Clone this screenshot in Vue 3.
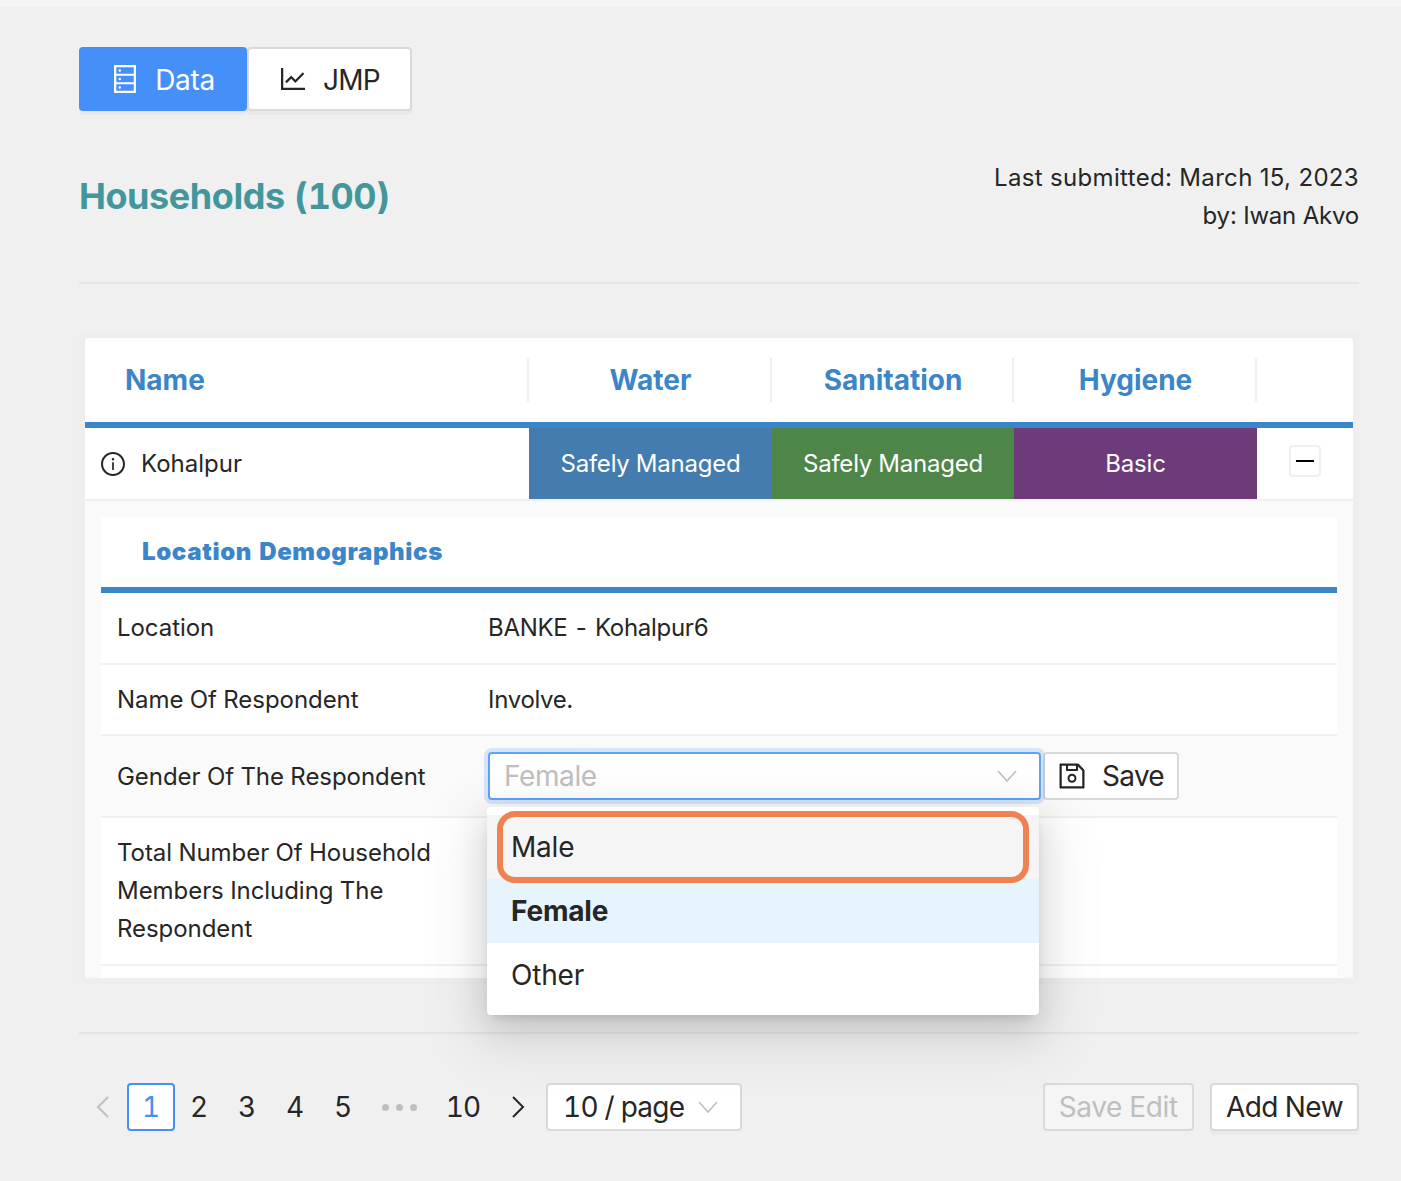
<script setup>
const statusCells = [
  { label: 'Safely Managed', color: '#447caf' },
  { label: 'Safely Managed', color: '#4e8549' },
  { label: 'Basic', color: '#6d3a7a' }
]
const columns = ['Water', 'Sanitation', 'Hygiene', '']
const pages = ['2', '3', '4', '5']
</script>

<template>
  <div class="page">
    <div class="tabs">
      <button class="tab tab-active">
        <svg class="tab-icon" viewBox="64 64 896 896" fill="currentColor"><path d="M832 64H192c-17.7 0-32 14.3-32 32v832c0 17.7 14.3 32 32 32h640c17.7 0 32-14.3 32-32V96c0-17.7-14.3-32-32-32zm-600 72h560v208H232V136zm560 480H232V408h560v208zm0 272H232V680h560v208zM304 240a40 40 0 1 0 80 0 40 40 0 1 0-80 0zm0 272a40 40 0 1 0 80 0 40 40 0 1 0-80 0zm0 272a40 40 0 1 0 80 0 40 40 0 1 0-80 0z"/></svg>
        <span class="tab-label">Data</span>
      </button>
      <button class="tab tab-jmp">
        <svg class="tab-icon" viewBox="64 64 896 896" fill="currentColor"><path d="M888 792H200V168c0-4.4-3.6-8-8-8h-56c-4.4 0-8 3.6-8 8v688c0 4.4 3.6 8 8 8h752c4.4 0 8-3.6 8-8v-56c0-4.4-3.6-8-8-8zM305.8 637.7c3.1 3.1 8.1 3.1 11.3 0l138.3-137.6L583 628.5c3.1 3.1 8.2 3.1 11.3 0l275.4-275.3c3.1-3.1 3.1-8.2 0-11.3l-39.6-39.6a8.03 8.03 0 0 0-11.3 0l-230 229.9L461.4 404a8.03 8.03 0 0 0-11.3 0L266.3 586.7a8.03 8.03 0 0 0 0 11.3l39.5 39.7z"/></svg>
        <span class="tab-label">JMP</span>
      </button>
    </div>

    <header class="heading">
      <h1>Households (100)</h1>
      <div class="submitted">
        <div>Last submitted: March 15, 2023</div>
        <div>by: Iwan Akvo</div>
      </div>
    </header>

    <div class="table-frame">
      <div class="table-card">
        <div class="grid head">
          <div class="head-cell head-name">Name</div>
          <div v-for="c in columns" :key="c" class="head-cell" :class="{ 'head-last': !c }">{{ c }}</div>
        </div>
        <div class="grid row">
          <div class="name-cell">
            <svg class="info" viewBox="64 64 896 896" fill="currentColor"><path d="M512 64C264.6 64 64 264.6 64 512s200.6 448 448 448 448-200.6 448-448S759.4 64 512 64zm0 820c-205.4 0-372-166.6-372-372s166.6-372 372-372 372 166.6 372 372-166.6 372-372 372z"/><path d="M464 336a48 48 0 1 0 96 0 48 48 0 1 0-96 0zm72 112h-48c-4.4 0-8 3.6-8 8v272c0 4.4 3.6 8 8 8h48c4.4 0 8-3.6 8-8V456c0-4.4-3.6-8-8-8z"/></svg>
            Kohalpur
          </div>
          <div v-for="(s, i) in statusCells" :key="i" class="status" :style="{ background: s.color }">{{ s.label }}</div>
          <div class="toggle-cell"><span class="toggle"><i></i></span></div>
        </div>

        <div class="expanded">
          <div class="inner">
            <div class="inner-title">Location Demographics</div>
            <div class="field">
              <div>Location</div>
              <div class="value">BANKE - Kohalpur6</div>
            </div>
            <div class="field field-short">
              <div>Name Of Respondent</div>
              <div class="value">Involve.</div>
            </div>
            <div class="field field-edit">
              <div class="edit-label">Gender Of The Respondent</div>
              <div class="editor">
                <div class="select-wrap">
                  <div class="select">
                    <span>Female</span>
                    <svg class="chev" viewBox="0 0 20 12" fill="none" stroke="currentColor" stroke-width="1.6"><path d="M1 1l9 10 9-10"/></svg>
                  </div>
                  <div class="dropdown">
                    <div class="option option-hover">Male</div>
                    <div class="option option-selected">Female</div>
                    <div class="option">Other</div>
                    <div class="highlight"></div>
                  </div>
                </div>
                <button class="save">
                  <svg class="save-icon" viewBox="64 64 896 896" fill="currentColor"><path d="M893.3 293.3L730.7 130.7c-7.5-7.5-16.7-13-26.7-16V112H144c-17.7 0-32 14.3-32 32v736c0 17.7 14.3 32 32 32h736c17.7 0 32-14.3 32-32V338.5c0-17-6.7-33.2-18.7-45.2zM384 184h256v104H384V184zm456 656H184V184h136v136c0 17.7 14.3 32 32 32h320c17.7 0 32-14.3 32-32V205.8l136 136V840zM512 442c-79.5 0-144 64.5-144 144s64.5 144 144 144 144-64.5 144-144-64.5-144-144-144zm0 224c-44.2 0-80-35.8-80-80s35.8-80 80-80 80 35.8 80 80-35.8 80-80 80z"/></svg>
                  Save
                </button>
              </div>
            </div>
            <div class="field">
              <div>Total Number Of Household Members Including The Respondent</div>
              <div class="value"></div>
            </div>
            <div class="field-tail"></div>
          </div>
        </div>
      </div>
    </div>

    <footer class="footer">
      <div class="pagination">
        <svg class="arrow arrow-off" viewBox="0 0 14 24" fill="none" stroke="currentColor" stroke-width="2"><path d="M12 2L2 12l10 10"/></svg>
        <span class="page-num page-current">1</span>
        <span v-for="p in pages" :key="p" class="page-num">{{ p }}</span>
        <span class="dots"><i></i><i></i><i></i></span>
        <span class="page-num page-ten">10</span>
        <svg class="arrow arrow-next" viewBox="0 0 14 24" fill="none" stroke="currentColor" stroke-width="2"><path d="M2 2l10 10L2 22"/></svg>
        <div class="size-select">
          <span>10 / page</span>
          <svg class="chev" viewBox="0 0 20 12" fill="none" stroke="currentColor" stroke-width="1.6"><path d="M1 1l9 10 9-10"/></svg>
        </div>
      </div>
      <div class="actions">
        <button class="btn btn-disabled">Save Edit</button>
        <button class="btn btn-add">Add New</button>
      </div>
    </footer>
  </div>
</template>

<style>
html, body { margin: 0; background: #f0f0f0; }
</style>

<style scoped>
.page {
  box-sizing: border-box;
  min-height: 1181px;
  padding: 40px 42px 0 79px;
  border-top: 7px solid #f5f5f5;
  background: #f0f0f0;
  font-family: Inter, "Liberation Sans", sans-serif;
  font-size: 24px;
  line-height: 38px;
  color: #262626;
  font-variant-numeric: tabular-nums;
}
button { font: inherit; color: inherit; cursor: pointer; }

.tabs { display: flex; }
.tab {
  box-sizing: border-box;
  height: 64px;
  width: 165px;
  display: flex;
  align-items: center;
  justify-content: center;
  gap: 16px;
  font-size: 28px;
  letter-spacing: -.3px;
  background: #fff;
  border: 2px solid #d9d9d9;
  border-radius: 4px;
  box-shadow: 0 4px 0 rgba(0, 0, 0, .03);
}
.tab-active {
  width: 168px;
  color: #fff;
  background: #458ff8;
  border-color: #458ff8;
}
.tab-jmp { letter-spacing: -.7px; }
.tab-icon { width: 28px; height: 28px; }
.tab-label { margin-top: 2px; }

.heading {
  display: flex;
  justify-content: space-between;
  align-items: flex-start;
  margin-top: 48px;
  padding-bottom: 48px;
  border-bottom: 2px solid #e4e4e4;
  height: 75px;
}
.heading h1 {
  margin: 15px 0 0;
  font-size: 36px;
  line-height: 44px;
  font-weight: 700;
  color: #43979c;
  letter-spacing: -.43px;
}
.submitted { text-align: right; font-variant-numeric: normal; }
.submitted div:first-child { letter-spacing: .33px; }
.submitted div:last-child { letter-spacing: -.2px; }

.table-frame {
  box-sizing: border-box;
  margin-top: 48px;
  padding: 6px 6px 0;
  background: #eeeeee;
  height: 652px;
}
.table-card { background: #fff; border-radius: 4px 4px 0 0; }

.grid { display: grid; grid-template-columns: 444px 243px 242px 243px 96px; }
.head { height: 84px; border-bottom: 6px solid #3b85c9; }
.head-cell {
  position: relative;
  display: flex;
  align-items: center;
  justify-content: center;
  font-size: 28px;
  font-weight: 700;
  color: #3b85c9;
}
.head-name { justify-content: flex-start; padding-left: 40px; }
.head-cell::after {
  content: "";
  position: absolute;
  right: 0;
  top: 20px;
  width: 2px;
  height: 44px;
  background: #f0f0f0;
}
.head-last::after { display: none; }

.row { height: 71px; border-bottom: 2px solid #f0f0f0; }
.name-cell { display: flex; align-items: center; padding-left: 16px; gap: 16px; }
.info { width: 24px; height: 24px; }
.status {
  display: flex;
  align-items: center;
  justify-content: center;
  color: #fff;
  letter-spacing: -.22px;
}
.toggle-cell { display: flex; align-items: center; justify-content: center; }
.toggle {
  box-sizing: border-box;
  width: 32px;
  height: 32px;
  margin-top: -5px;
  display: flex;
  align-items: center;
  justify-content: center;
  border: 2px solid #f0f0f0;
  border-radius: 4px;
}
.toggle i { display: block; width: 18px; height: 2px; background: #000; }

.expanded { padding: 16px 16px 0; background: #fafafa; }
.inner { background: #fff; letter-spacing: -.05px; }
.inner-title {
  height: 70px;
  padding-left: 41px;
  border-bottom: 6px solid #3b85c9;
  display: flex;
  align-items: center;
  font-weight: 900;
  color: #3b85c9;
  letter-spacing: .65px;
}
.field {
  display: grid;
  grid-template-columns: 371px 1fr;
  padding: 16px;
  border-bottom: 2px solid #f0f0f0;
}
.field-short { padding-bottom: 15px; }
.value { min-width: 0; letter-spacing: -.3px; }
.field-edit { background: #fafafa; align-items: center; }
.edit-label { margin-top: 2px; }
.field-tail { height: 12px; }

.editor { display: flex; align-items: center; letter-spacing: -.2px; font-size: 28px; }
.select-wrap { position: relative; width: 553px; }
.select {
  box-sizing: border-box;
  height: 48px;
  padding: 0 22px 0 14px;
  display: flex;
  align-items: center;
  justify-content: space-between;
  background: #fff;
  border: 2px solid #5ea3f9;
  border-radius: 4px;
  box-shadow: 0 0 0 4px rgba(69, 143, 248, .2);
  color: #bfbfbf;
}
.select span { letter-spacing: -.4px; }
.chev { width: 20px; height: 12px; color: #bfbfbf; }
.dropdown {
  position: absolute;
  z-index: 5;
  top: 55px;
  left: -1px;
  width: 552px;
  box-sizing: border-box;
  padding: 8px 0;
  background: #fff;
  border-radius: 4px;
  box-shadow: 0 6px 12px -8px rgba(0,0,0,.24), 0 12px 32px 0 rgba(0,0,0,.12), 0 18px 56px 16px rgba(0,0,0,.08);
}
.option { height: 64px; padding: 0 24px; display: flex; align-items: center; }
.option-hover { background: #f5f5f5; }
.option-selected { background: #e6f4fd; font-weight: 700; }
.highlight {
  position: absolute;
  left: 10px;
  right: 10px;
  top: 4px;
  height: 72px;
  box-sizing: border-box;
  border: 6px solid #f08153;
  border-radius: 18px;
  pointer-events: none;
}
.save {
  box-sizing: border-box;
  width: 136px;
  height: 48px;
  margin-left: 2px;
  display: flex;
  align-items: center;
  justify-content: center;
  gap: 16px;
  background: #fff;
  border: 2px solid #d9d9d9;
  border-radius: 4px;
  letter-spacing: -.7px;
}
.save-icon { width: 28px; height: 28px; }

.footer {
  margin-top: 48px;
  padding-top: 49px;
  border-top: 2px solid #e4e4e4;
  display: flex;
  justify-content: space-between;
  align-items: center;
  font-size: 28px;
}
.pagination { display: flex; align-items: center; }
.arrow { width: 14px; height: 24px; }
.arrow-next { margin-left: 16px; }
.arrow-off { color: #bfbfbf; margin: 0 17px; }
.page-num { width: 48px; height: 48px; display: flex; align-items: center; justify-content: center; box-sizing: border-box; }
.page-current { background: #fff; border: 2px solid #458ff8; border-radius: 4px; color: #458ff8; }
.dots { width: 64px; display: flex; justify-content: center; gap: 7px; }
.dots i { width: 7px; height: 7px; border-radius: 50%; background: #bfbfbf; }
.page-ten { width: 64px; letter-spacing: -1px; }
.size-select {
  box-sizing: border-box;
  width: 196px;
  height: 48px;
  margin-left: 21px;
  padding: 0 22px 0 15px;
  display: flex;
  align-items: center;
  justify-content: space-between;
  background: #fff;
  border: 2px solid #d9d9d9;
  border-radius: 4px;
  letter-spacing: -.75px;
}
.actions { display: flex; gap: 16px; }
.btn {
  box-sizing: border-box;
  height: 48px;
  padding: 0 14px;
  background: #fff;
  border: 2px solid #d9d9d9;
  border-radius: 4px;
}
.btn-add { letter-spacing: -.55px; box-shadow: 0 4px 0 rgba(0, 0, 0, .02); }
.btn-disabled { background: #f5f5f5; color: #bfbfbf; letter-spacing: -.33px; }
</style>
